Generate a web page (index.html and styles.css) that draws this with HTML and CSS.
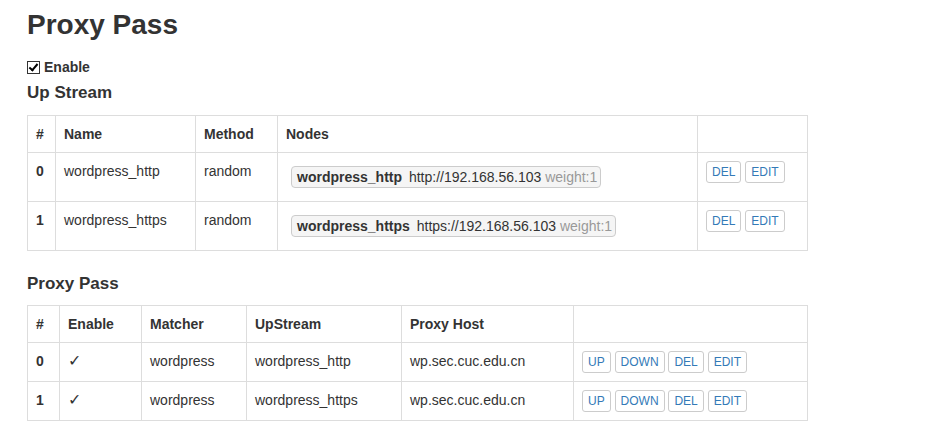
FILE: index.html
```html
<!DOCTYPE html>
<html>
<head>
<meta charset="utf-8">
<link rel="stylesheet" href="styles.css">
</head>
<body>
<div class="page">
  <h1 class="title">Proxy Pass</h1>
  <label class="enable"><input type="checkbox" checked> Enable</label>
  <h4 class="section">Up Stream</h4>
  <table class="grid">
    <colgroup><col style="width:28px"><col style="width:140px"><col style="width:82px"><col style="width:420px"><col style="width:110px"></colgroup>
    <thead>
      <tr><th>#</th><th>Name</th><th>Method</th><th>Nodes</th><th></th></tr>
    </thead>
    <tbody>
      <tr>
        <th>0</th><td>wordpress_http</td><td>random</td>
        <td><span class="node"><b>wordpress_http</b> http://192.168.56.103 <span class="weight">weight:1</span></span></td>
        <td><button class="btn">DEL</button> <button class="btn">EDIT</button></td>
      </tr>
      <tr>
        <th>1</th><td>wordpress_https</td><td>random</td>
        <td><span class="node"><b>wordpress_https</b> https://192.168.56.103 <span class="weight">weight:1</span></span></td>
        <td><button class="btn">DEL</button> <button class="btn">EDIT</button></td>
      </tr>
    </tbody>
  </table>
  <h4 class="section second">Proxy Pass</h4>
  <table class="grid">
    <colgroup><col style="width:32px"><col style="width:82px"><col style="width:105px"><col style="width:155px"><col style="width:172px"><col style="width:234px"></colgroup>
    <thead>
      <tr><th>#</th><th>Enable</th><th>Matcher</th><th>UpStream</th><th>Proxy Host</th><th></th></tr>
    </thead>
    <tbody>
      <tr>
        <th>0</th><td class="check">✓</td><td>wordpress</td><td>wordpress_http</td><td>wp.sec.cuc.edu.cn</td>
        <td><button class="btn">UP</button> <button class="btn">DOWN</button> <button class="btn">DEL</button> <button class="btn">EDIT</button></td>
      </tr>
      <tr>
        <th>1</th><td class="check">✓</td><td>wordpress</td><td>wordpress_https</td><td>wp.sec.cuc.edu.cn</td>
        <td><button class="btn">UP</button> <button class="btn">DOWN</button> <button class="btn">DEL</button> <button class="btn">EDIT</button></td>
      </tr>
    </tbody>
  </table>
</div>
</body>
</html>
```
FILE: styles.css
```css
html, body {
  margin: 0;
  padding: 0;
  background: #fff;
}
body {
  font-family: "Liberation Sans", Arial, sans-serif;
  font-size: 14px;
  line-height: 20px;
  color: #333;
}
.page {
  padding: 0 0 0 27px;
}
.title {
  font-size: 28px;
  line-height: 31px;
  font-weight: bold;
  margin: 9px 0 15px 0;
}
.enable {
  display: flex;
  align-items: center;
  gap: 4px;
  font-weight: bold;
  height: 20px;
  padding-top: 2px;
}
.enable input {
  -webkit-appearance: none;
  appearance: none;
  position: relative;
  margin: 0;
  width: 13px;
  height: 13px;
  border: 1px solid #333;
  background: #fff;
  box-sizing: border-box;
}
.enable input::after {
  content: "";
  position: absolute;
  left: 3px;
  top: 0px;
  width: 3px;
  height: 7px;
  border: solid #000;
  border-width: 0 2px 2px 0;
  transform: rotate(40deg);
}
.section {
  font-size: 17px;
  line-height: 20px;
  font-weight: bold;
  margin: 6px 0 12px 0;
}
.section.second {
  margin: 23px 0 11px 0;
}
.grid {
  width: 780px;
  table-layout: fixed;
  border-collapse: collapse;
  border: 1px solid #ddd;
}
.grid th, .grid td {
  border: 1px solid #ddd;
  padding: 8px;
  text-align: left;
  vertical-align: top;
  line-height: 20px;
  white-space: nowrap;
}
.grid th {
  font-weight: bold;
}
.node {
  display: inline-block;
  margin: 5px 0 5px 5px;
  padding: 0 3px 0 5px;
  background: #f5f5f5;
  border: 1px solid #ccc;
  border-radius: 4px;
  line-height: 20px;
}
.node b {
  margin-right: 3px;
}
.weight {
  color: #999;
}
.btn {
  display: inline-block;
  font-family: "Liberation Sans", Arial, sans-serif;
  font-size: 12px;
  line-height: 18px;
  padding: 1px 5px;
  margin: 0;
  color: #337ab7;
  background: #fff;
  border: 1px solid #ccc;
  border-radius: 3px;
  vertical-align: top;
}
.grid td.check {
  font-family: "DejaVu Sans", sans-serif;
  font-size: 16px;
  font-weight: 300;
  color: #333;
}
```
